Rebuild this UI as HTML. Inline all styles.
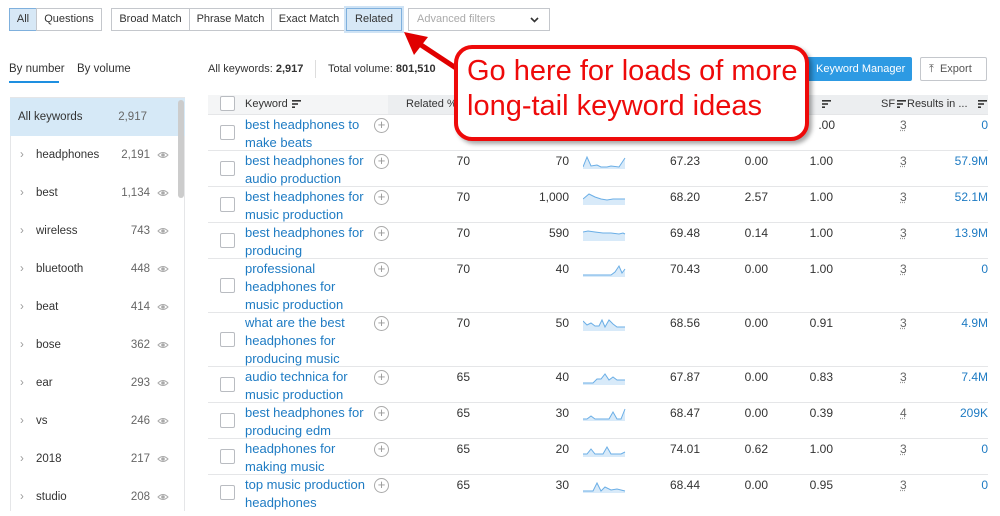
<!DOCTYPE html>
<html><head><meta charset="utf-8"><style>
*{box-sizing:border-box;margin:0;padding:0}
body{width:1000px;height:511px;overflow:hidden;background:#fff;font-family:"Liberation Sans",sans-serif;font-size:12px;color:#333;position:relative}
.a{position:absolute;white-space:nowrap}
.btn{position:absolute;top:8px;height:23px;border:1px solid #c4c7cc;background:#fff;font-size:11px;line-height:21px;text-align:center;color:#333}
.sel{background:#d7e8f6;border-color:#7fb0dd;color:#333}
.side{position:absolute;left:10px;width:175px;height:38px;line-height:38px;font-size:11.5px}
.side .c{position:absolute;right:35px;color:#666}
.side .e{position:absolute;right:16px;top:14px}
.side .ch{position:absolute;left:10px;color:#999}
.side .t{position:absolute;left:26px}
.row{position:absolute;left:208px;width:780px;border-top:1px solid #e5e6e8}
.cb{position:absolute;left:12px;width:15px;height:15px;border:1px solid #b9bcc1;border-radius:2px;background:#fff}
.kw{position:absolute;left:37px;top:1px;color:#1e7bc3;font-size:13px;line-height:18px;width:125px;white-space:normal}
.pl{position:absolute;left:166px;top:3px;width:15px;height:15px;border:1px solid #aaa;border-radius:50%;color:#999;font-size:13px;line-height:12px;text-align:center}
.n{position:absolute;top:1px;line-height:18px;font-size:12px;text-align:right;color:#333}
.sf{position:absolute;left:692px;top:1px;line-height:18px;color:#666;text-decoration:underline dotted #999}
.r{position:absolute;right:0;top:1px;line-height:18px;color:#1e7bc3;font-size:12px}
svg.sp{position:absolute;left:375px;top:4px}
</style></head><body>

<div class="btn sel" style="left:9px;width:28px">All</div>
<div class="btn" style="left:36px;width:66px">Questions</div>
<div class="btn" style="left:111px;width:79px">Broad Match</div>
<div class="btn" style="left:189px;width:83px">Phrase Match</div>
<div class="btn" style="left:271px;width:76px">Exact Match</div>
<div class="btn sel" style="left:346px;width:56px;box-shadow:0 0 0 2px #cfe3f5">Related</div>
<div class="btn" style="left:408px;width:142px;text-align:left;padding-left:8px;color:#aaa">Advanced filters<svg style="position:absolute;right:10px;top:8px" width="9" height="6"><polyline points="1,1 4.5,4.5 8,1" fill="none" stroke="#333" stroke-width="1.6"/></svg></div>

<div class="a" style="left:9px;top:63px;font-size:11.5px">By number</div>
<div class="a" style="left:9px;top:81px;width:50px;height:2px;background:#1e8fe0"></div>
<div class="a" style="left:77px;top:63px;font-size:11.5px">By volume</div>

<div class="a" style="left:10px;top:97px;width:175px;height:414px;border:1px solid #e5e6e8;border-bottom:none"></div>
<div class="side" style="top:98px;background:#d6e9f7;height:38px"><span class="a" style="left:8px">All keywords</span><span class="c" style="right:38px">2,917</span></div>
<div class="a" style="left:178px;top:100px;width:6px;height:98px;background:#ccc;border-radius:3px"></div>

<svg width="0" height="0" style="position:absolute"><defs><g id="eye"><path d="M1,5 Q6,0 11,5 Q6,10 1,5Z" fill="none" stroke="#aaa" stroke-width="1"/><circle cx="6" cy="5" r="1.8" fill="#aaa"/></g></defs></svg>

<div class="side" style="top:136px"><span class="ch">›</span><span class="t">headphones</span><span class="c">2,191</span><svg class="e" width="12" height="10"><use href="#eye"/></svg></div>
<div class="side" style="top:174px"><span class="ch">›</span><span class="t">best</span><span class="c">1,134</span><svg class="e" width="12" height="10"><use href="#eye"/></svg></div>
<div class="side" style="top:212px"><span class="ch">›</span><span class="t">wireless</span><span class="c">743</span><svg class="e" width="12" height="10"><use href="#eye"/></svg></div>
<div class="side" style="top:250px"><span class="ch">›</span><span class="t">bluetooth</span><span class="c">448</span><svg class="e" width="12" height="10"><use href="#eye"/></svg></div>
<div class="side" style="top:288px"><span class="ch">›</span><span class="t">beat</span><span class="c">414</span><svg class="e" width="12" height="10"><use href="#eye"/></svg></div>
<div class="side" style="top:326px"><span class="ch">›</span><span class="t">bose</span><span class="c">362</span><svg class="e" width="12" height="10"><use href="#eye"/></svg></div>
<div class="side" style="top:364px"><span class="ch">›</span><span class="t">ear</span><span class="c">293</span><svg class="e" width="12" height="10"><use href="#eye"/></svg></div>
<div class="side" style="top:402px"><span class="ch">›</span><span class="t">vs</span><span class="c">246</span><svg class="e" width="12" height="10"><use href="#eye"/></svg></div>
<div class="side" style="top:440px"><span class="ch">›</span><span class="t">2018</span><span class="c">217</span><svg class="e" width="12" height="10"><use href="#eye"/></svg></div>
<div class="side" style="top:478px"><span class="ch">›</span><span class="t">studio</span><span class="c">208</span><svg class="e" width="12" height="10"><use href="#eye"/></svg></div>

<div class="a" style="left:208px;top:63px;font-size:11px">All keywords: <b>2,917</b></div>
<div class="a" style="left:315px;top:60px;width:1px;height:18px;background:#ddd"></div>
<div class="a" style="left:328px;top:63px;font-size:11px">Total volume: <b>801,510</b></div>
<div class="a" style="left:800px;top:57px;width:112px;height:24px;background:#2d9ae3;color:#fff;line-height:24px;padding-left:16px;border-radius:2px;font-size:11px">Keyword Manager</div>
<div class="a" style="left:920px;top:57px;width:67px;height:24px;border:1px solid #c4c7cc;border-radius:2px;line-height:22px;padding-left:8px;color:#555;font-size:11px">⤒&nbsp; Export</div>

<svg width="0" height="0" style="position:absolute"><defs><g id="srt"><rect x="0" y="0" width="9" height="1.6" fill="#333"/><rect x="0" y="3.2" width="6" height="1.6" fill="#333"/><rect x="0" y="6.4" width="3" height="1.6" fill="#333"/></g></defs></svg>
<div class="a" style="left:208px;top:95px;width:780px;height:19px;background:#eceef0"></div>
<div class="a" style="left:208px;top:95px;width:180px;height:19px;background:#f4f5f6"></div>
<div class="cb" style="left:220px;top:96px;position:absolute"></div>
<div class="a" style="left:245px;top:98px;font-size:11px">Keyword</div><svg class="a" style="left:292px;top:100px" width="9" height="8"><use href="#srt"/></svg>
<div class="a" style="left:406px;top:98px;font-size:11px">Related %</div>
<svg class="a" style="left:822px;top:100px" width="9" height="8"><use href="#srt"/></svg>
<div class="a" style="left:881px;top:98px;font-size:11px">SF</div><svg class="a" style="left:897px;top:100px" width="9" height="8"><use href="#srt"/></svg>
<div class="a" style="left:907px;top:98px;font-size:11px">Results in ...</div><svg class="a" style="left:978px;top:100px" width="9" height="8"><use href="#srt"/></svg>

<div class="row" style="top:114px;height:36px"><div class="cb" style="top:10px"></div><div class="kw">best headphones to make beats</div><div class="pl">+</div><div class="n" style="left:592px;width:35px">.00</div><div class="sf">3</div><div class="r">0</div></div>

<div class="row" style="top:150px;height:36px"><div class="cb" style="top:10px"></div><div class="kw">best headphones for audio production</div><div class="pl">+</div><div class="n" style="left:230px;width:32px">70</div><div class="n" style="left:300px;width:61px">70</div><svg class="sp" width="43" height="15"><polyline points="0,12 4,2 8,11 14,10 18,12 24,12 28,11 36,12 42,3 42,14 0,14" fill="#d8eaf9"/><polyline points="0,12 4,2 8,11 14,10 18,12 24,12 28,11 36,12 42,3" fill="none" stroke="#6aaee6"/></svg><div class="n" style="left:440px;width:52px">67.23</div><div class="n" style="left:510px;width:50px">0.00</div><div class="n" style="left:580px;width:45px">1.00</div><div class="sf">3</div><div class="r">57.9M</div></div>

<div class="row" style="top:186px;height:36px"><div class="cb" style="top:10px"></div><div class="kw">best headphones for music production</div><div class="pl">+</div><div class="n" style="left:230px;width:32px">70</div><div class="n" style="left:300px;width:61px">1,000</div><svg class="sp" width="43" height="15"><polyline points="0,8 6,3 12,6 18,8 24,9 30,8 42,8 42,14 0,14" fill="#d8eaf9"/><polyline points="0,8 6,3 12,6 18,8 24,9 30,8 42,8" fill="none" stroke="#6aaee6"/></svg><div class="n" style="left:440px;width:52px">68.20</div><div class="n" style="left:510px;width:50px">2.57</div><div class="n" style="left:580px;width:45px">1.00</div><div class="sf">3</div><div class="r">52.1M</div></div>

<div class="row" style="top:222px;height:36px"><div class="cb" style="top:10px"></div><div class="kw">best headphones for producing</div><div class="pl">+</div><div class="n" style="left:230px;width:32px">70</div><div class="n" style="left:300px;width:61px">590</div><svg class="sp" width="43" height="15"><polyline points="0,5 5,4 12,5 20,6 28,6 36,7 40,6 42,7 42,14 0,14" fill="#d8eaf9"/><polyline points="0,5 5,4 12,5 20,6 28,6 36,7 40,6 42,7" fill="none" stroke="#6aaee6"/></svg><div class="n" style="left:440px;width:52px">69.48</div><div class="n" style="left:510px;width:50px">0.14</div><div class="n" style="left:580px;width:45px">1.00</div><div class="sf">3</div><div class="r">13.9M</div></div>

<div class="row" style="top:258px;height:54px"><div class="cb" style="top:19px"></div><div class="kw">professional headphones for music production</div><div class="pl">+</div><div class="n" style="left:230px;width:32px">70</div><div class="n" style="left:300px;width:61px">40</div><svg class="sp" width="43" height="15"><polyline points="0,12 28,12 32,9 36,3 39,10 42,6 42,14 0,14" fill="#d8eaf9"/><polyline points="0,12 28,12 32,9 36,3 39,10 42,6" fill="none" stroke="#6aaee6"/></svg><div class="n" style="left:440px;width:52px">70.43</div><div class="n" style="left:510px;width:50px">0.00</div><div class="n" style="left:580px;width:45px">1.00</div><div class="sf">3</div><div class="r">0</div></div>

<div class="row" style="top:312px;height:54px"><div class="cb" style="top:19px"></div><div class="kw">what are the best headphones for producing music</div><div class="pl">+</div><div class="n" style="left:230px;width:32px">70</div><div class="n" style="left:300px;width:61px">50</div><svg class="sp" width="43" height="15"><polyline points="0,4 4,8 8,6 12,9 16,9 19,3 22,10 26,3 30,7 34,10 42,10 42,14 0,14" fill="#d8eaf9"/><polyline points="0,4 4,8 8,6 12,9 16,9 19,3 22,10 26,3 30,7 34,10 42,10" fill="none" stroke="#6aaee6"/></svg><div class="n" style="left:440px;width:52px">68.56</div><div class="n" style="left:510px;width:50px">0.00</div><div class="n" style="left:580px;width:45px">0.91</div><div class="sf">3</div><div class="r">4.9M</div></div>

<div class="row" style="top:366px;height:36px"><div class="cb" style="top:10px"></div><div class="kw">audio technica for music production</div><div class="pl">+</div><div class="n" style="left:230px;width:32px">65</div><div class="n" style="left:300px;width:61px">40</div><svg class="sp" width="43" height="15"><polyline points="0,12 10,12 14,8 18,8 22,3 26,9 30,6 34,9 42,9 42,14 0,14" fill="#d8eaf9"/><polyline points="0,12 10,12 14,8 18,8 22,3 26,9 30,6 34,9 42,9" fill="none" stroke="#6aaee6"/></svg><div class="n" style="left:440px;width:52px">67.87</div><div class="n" style="left:510px;width:50px">0.00</div><div class="n" style="left:580px;width:45px">0.83</div><div class="sf">3</div><div class="r">7.4M</div></div>

<div class="row" style="top:402px;height:36px"><div class="cb" style="top:10px"></div><div class="kw">best headphones for producing edm</div><div class="pl">+</div><div class="n" style="left:230px;width:32px">65</div><div class="n" style="left:300px;width:61px">30</div><svg class="sp" width="43" height="15"><polyline points="0,12 4,12 8,9 12,12 26,12 30,5 34,12 38,12 42,2 42,14 0,14" fill="#d8eaf9"/><polyline points="0,12 4,12 8,9 12,12 26,12 30,5 34,12 38,12 42,2" fill="none" stroke="#6aaee6"/></svg><div class="n" style="left:440px;width:52px">68.47</div><div class="n" style="left:510px;width:50px">0.00</div><div class="n" style="left:580px;width:45px">0.39</div><div class="sf">4</div><div class="r">209K</div></div>

<div class="row" style="top:438px;height:36px"><div class="cb" style="top:10px"></div><div class="kw">headphones for making music</div><div class="pl">+</div><div class="n" style="left:230px;width:32px">65</div><div class="n" style="left:300px;width:61px">20</div><svg class="sp" width="43" height="15"><polyline points="0,11 4,11 8,6 12,11 20,11 24,4 28,11 38,11 42,9 42,14 0,14" fill="#d8eaf9"/><polyline points="0,11 4,11 8,6 12,11 20,11 24,4 28,11 38,11 42,9" fill="none" stroke="#6aaee6"/></svg><div class="n" style="left:440px;width:52px">74.01</div><div class="n" style="left:510px;width:50px">0.62</div><div class="n" style="left:580px;width:45px">1.00</div><div class="sf">3</div><div class="r">0</div></div>

<div class="row" style="top:474px;height:37px"><div class="cb" style="top:10px"></div><div class="kw">top music production headphones</div><div class="pl">+</div><div class="n" style="left:230px;width:32px">65</div><div class="n" style="left:300px;width:61px">30</div><svg class="sp" width="43" height="15"><polyline points="0,12 10,12 14,4 18,12 22,8 28,11 34,10 42,12 42,14 0,14" fill="#d8eaf9"/><polyline points="0,12 10,12 14,4 18,12 22,8 28,11 34,10 42,12" fill="none" stroke="#6aaee6"/></svg><div class="n" style="left:440px;width:52px">68.44</div><div class="n" style="left:510px;width:50px">0.00</div><div class="n" style="left:580px;width:45px">0.95</div><div class="sf">3</div><div class="r">0</div></div>

<!-- callout -->
<svg class="a" style="left:0;top:0" width="1000" height="511">
<line x1="462" y1="72" x2="418" y2="43" stroke="#e00000" stroke-width="5"/>
<polygon points="404,32 428,37 414,55" fill="#e00000"/>
</svg>
<div class="a" style="left:454px;top:45px;width:355px;height:96px;border:4px solid #ee0a0a;border-radius:18px;background:#fff;box-shadow:3px 3px 4px rgba(0,0,0,.35)"></div>
<div class="a" style="left:467px;top:54px;color:#ee0a0a;font-size:29px;line-height:35px">Go here for loads of more<br>long-tail keyword ideas</div>
</body></html>
